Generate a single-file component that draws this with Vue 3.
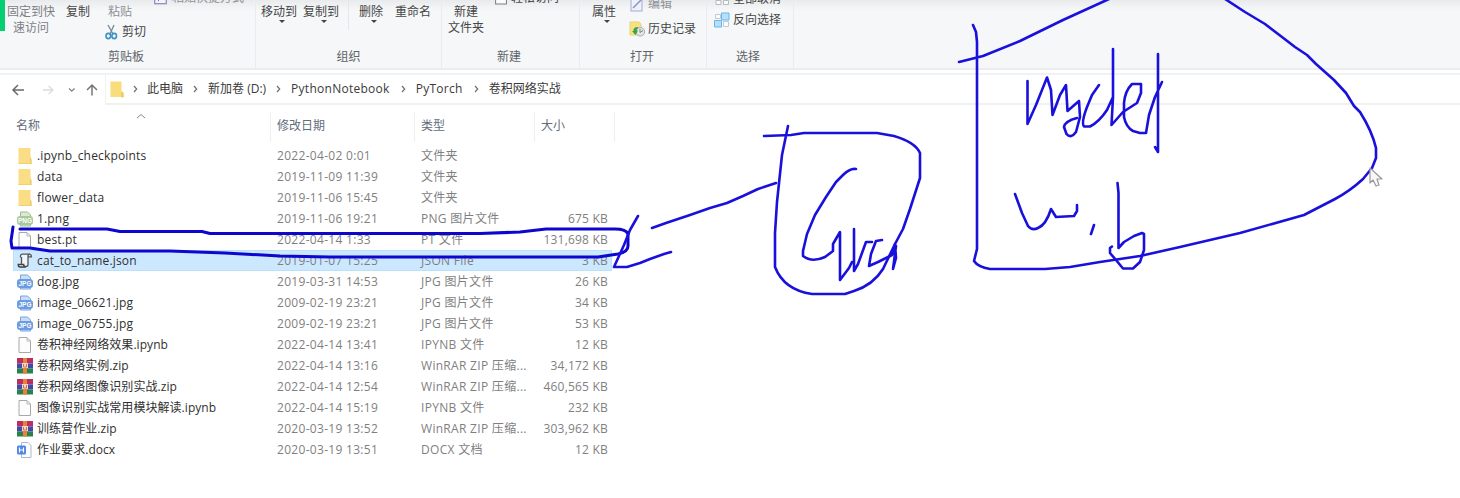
<script setup>
const files = [
  { icon: 'folder', name: '.ipynb_checkpoints', date: '2022-04-02 0:01', type: '文件夹', size: '' },
  { icon: 'folder', name: 'data', date: '2019-11-09 11:39', type: '文件夹', size: '' },
  { icon: 'folder', name: 'flower_data', date: '2019-11-06 15:45', type: '文件夹', size: '' },
  { icon: 'png', name: '1.png', date: '2019-11-06 19:21', type: 'PNG 图片文件', size: '675 KB' },
  { icon: 'file', name: 'best.pt', date: '2022-04-14 1:33', type: 'PT 文件', size: '131,698 KB' },
  { icon: 'json', name: 'cat_to_name.json', date: '2019-01-07 15:25', type: 'JSON File', size: '3 KB', selected: true },
  { icon: 'jpg', name: 'dog.jpg', date: '2019-03-31 14:53', type: 'JPG 图片文件', size: '26 KB' },
  { icon: 'jpg', name: 'image_06621.jpg', date: '2009-02-19 23:21', type: 'JPG 图片文件', size: '34 KB' },
  { icon: 'jpg', name: 'image_06755.jpg', date: '2009-02-19 23:21', type: 'JPG 图片文件', size: '53 KB' },
  { icon: 'file', name: '卷积神经网络效果.ipynb', date: '2022-04-14 13:41', type: 'IPYNB 文件', size: '12 KB' },
  { icon: 'zip', name: '卷积网络实例.zip', date: '2022-04-14 13:16', type: 'WinRAR ZIP 压缩...', size: '34,172 KB' },
  { icon: 'zip', name: '卷积网络图像识别实战.zip', date: '2022-04-14 12:54', type: 'WinRAR ZIP 压缩...', size: '460,565 KB' },
  { icon: 'file', name: '图像识别实战常用模块解读.ipynb', date: '2022-04-14 15:19', type: 'IPYNB 文件', size: '232 KB' },
  { icon: 'zip', name: '训练营作业.zip', date: '2020-03-19 13:52', type: 'WinRAR ZIP 压缩...', size: '303,962 KB' },
  { icon: 'docx', name: '作业要求.docx', date: '2020-03-19 13:51', type: 'DOCX 文档', size: '12 KB' },
]
const crumbs = ['此电脑', '新加卷 (D:)', 'PythonNotebook', 'PyTorch', '卷积网络实战']
const isLatin = (s) => /^[\x20-\x7e]+$/.test(s)
</script>

<template>
  <div class="window">
    <header class="ribbon">
      <section class="group clip">
        <div class="tools">
          <div class="big pin">固定到快<br>速访问</div>
          <div class="big copy">复制</div>
          <div class="stack paste">
            <div class="faded">粘贴</div>
            <div class="line">
              <svg width="13" height="16" viewBox="0 0 13 16">
                <path d="M3 1 8 10M9 1 5 10" stroke="#788898" stroke-width="1.3" fill="none" />
                <ellipse cx="3.3" cy="12" rx="2.3" ry="2.6" fill="none" stroke="#3e91c0" stroke-width="1.6" />
                <ellipse cx="9.2" cy="12" rx="2.3" ry="2.6" fill="none" stroke="#3e91c0" stroke-width="1.6" />
              </svg>
              <span>剪切</span>
            </div>
          </div>
          <div class="line shortcut faded">
            <svg width="13" height="14" viewBox="0 0 13 14"><rect x=".7" y=".7" width="11.6" height="12" fill="#f2f4fc" stroke="#8c91bf" stroke-width="1.3" /><path d="M4 10 8 6M5 6h3v3" fill="none" stroke="#6373bd" /></svg>
            <span>粘贴快捷方式</span>
          </div>
        </div>
        <div class="label">剪贴板</div>
      </section>

      <section class="group organize">
        <div class="tools">
          <div class="big drop">移动到<i></i></div>
          <div class="big drop">复制到<i></i></div>
          <div class="rule"></div>
          <div class="big drop">删除<i></i></div>
          <div class="big">重命名</div>
        </div>
        <div class="label">组织</div>
      </section>

      <section class="group create">
        <div class="tools">
          <div class="big">新建<br>文件夹</div>
          <div class="line easy">
            <svg width="12" height="14" viewBox="0 0 12 14"><rect x=".6" y=".6" width="10.8" height="12.4" fill="#fafbfc" stroke="#777c82" /></svg>
            <span>轻松访问</span>
          </div>
        </div>
        <div class="label">新建</div>
      </section>

      <section class="group open">
        <div class="tools">
          <div class="big drop">属性<i></i></div>
          <div class="stack">
            <div class="line edit faded">
              <svg width="14" height="16" viewBox="0 0 14 16"><rect x="1" y="1" width="11" height="14" fill="#eef0fa" stroke="#a7abcf" /><path d="M3 12 12 3" stroke="#8d95c6" stroke-width="1.5" /></svg>
              <span>编辑</span>
            </div>
            <div class="line history">
              <svg width="17" height="16" viewBox="0 0 17 16"><path d="M1 1h9l2 2v11H1z" fill="#fae084" stroke="#ecd170" /><circle cx="11.3" cy="10.8" r="4.3" fill="#e1e5e6" stroke="#a5adae" /><path d="M11 8v3.500l3-2" fill="none" stroke="#7c8686" /><path d="M9 6Q4 6 4.500 10L3 10l3.500 4 2.500-4.500H7.500Q7.500 7.500 9 7.500" fill="#37a544" /></svg>
              <span>历史记录</span>
            </div>
          </div>
        </div>
        <div class="label">打开</div>
      </section>

      <section class="group select">
        <div class="tools">
          <div class="stack">
            <div class="line none">
              <svg width="16" height="16" viewBox="0 0 16 16"><path d="M2 2h5v5H2zM9.500 2h5v5h-5zM2 9.500h5v4H2zM9.500 9.500h5v4h-5z" fill="#fafbfc" stroke="#b7bbbf" /></svg>
              <span>全部取消</span>
            </div>
            <div class="line">
              <svg width="16" height="16" viewBox="0 0 16 16"><path d="M1.500 2.500h5v4h-5zM9.500 9.500h5v5h-5z" fill="#fafbfc" stroke="#c0c9d0" /><path d="M7.500 1h7.500v7H7.500zM.5 8.500h7v6.500h-7z" fill="#b4e0fb" stroke="#69b5e7" /></svg>
              <span>反向选择</span>
            </div>
          </div>
        </div>
        <div class="label">选择</div>
      </section>
    </header>

    <nav class="address">
      <svg class="arrows" width="105" height="29" viewBox="0 0 105 29" fill="none">
        <path d="M24 15H13M18 10l-5 5 5 5" stroke="#6b6b6b" stroke-width="1.5" />
        <path d="M43 15h10M48.500 11l4.500 4-4.500 4" stroke="#dcdcdc" stroke-width="1.3" />
        <path d="M69 13.500l2.800 2.600 2.800-2.600" stroke="#888" stroke-width="1.3" />
        <path d="M92 20.500V10M87 15l5-5 5 5" stroke="#757575" stroke-width="1.5" />
      </svg>
      <div class="path">
        <svg class="icon" width="14" height="17" viewBox="0 0 14 17"><path d="M.5.5h11V11l2 1v4H.5z" fill="#f9dc7b" /><path d="M11.500 10v6.500h2V12z" fill="#eac65b" /></svg>
        <template v-for="crumb in crumbs" :key="crumb">
          <svg class="chev" width="5" height="8" viewBox="0 0 5 8"><path d="M1 1l2.700 3L1 7" fill="none" stroke="#707070" stroke-width="1.2" /></svg>
          <span class="crumb" :class="{ latin: isLatin(crumb) }">{{ crumb }}</span>
        </template>
      </div>
    </nav>

    <main class="list">
      <div class="row head">
        <span>名称<svg class="sort" width="10" height="6" viewBox="0 0 10 6"><path d="M1 5l4-3.500L9 5" fill="none" stroke="#8a8a8a" /></svg></span>
        <span>修改日期</span>
        <span>类型</span>
        <span>大小</span>
      </div>
      <div v-for="f in files" :key="f.name" class="row" :class="{ selected: f.selected }">
        <div class="name">
          <svg class="icon" width="16" height="18" viewBox="0 0 16 18">
            <template v-if="f.icon === 'folder'">
              <path d="M1.500 1h12v11l1 1v4h-13z" fill="#fadd84" /><path d="M13 10v7h1.500v-5z" fill="#eccb68" /><path d="M1.500 16.500h13" stroke="#f0d06f" />
            </template>
            <template v-else-if="f.icon === 'file'">
              <path d="M2 1.500h8l3.500 3.500v11.500H2z" fill="#fdfdfd" stroke="#a8a8a8" /><path d="M10 1.500V5h3.500" fill="none" stroke="#b8b8b8" />
            </template>
            <template v-else-if="f.icon === 'json'">
              <path d="M3.500 5.500V4q0-1.800 2-1.800h7.500q-2 0-2 2v8.300q0 2-2 2H3q1.500-.5 1.500-2.500V5" fill="#f1f6fa" stroke="#555" stroke-width="1.3" /><path d="M1.200 12.500q0 2.500 2 2.500h5.500q-2 0-2-2.500z" fill="#f4f4f4" stroke="#444" stroke-width="1.400" /><path d="M12.500 2q2 .2 2 2.800H11" fill="none" stroke="#555" stroke-width="1.200" />
            </template>
            <template v-else-if="f.icon === 'jpg' || f.icon === 'png'">
              <path d="M3.500 2h7l3 3v11h-10z" :fill="f.icon === 'jpg' ? '#c9defa' : '#d9ebd1'" :stroke="f.icon === 'jpg' ? '#78a4df' : '#9bbd8c'" />
              <rect x="0" y="6" width="16" height="9" rx="3" :fill="f.icon === 'jpg' ? '#6b9ce3' : '#a8c899'" />
              <text x="8" y="13" class="tag">{{ f.icon.toUpperCase() }}</text>
            </template>
            <template v-else-if="f.icon === 'zip'">
              <rect x="0" y="1" width="16" height="5.500" fill="#b92f62" /><rect x="0" y="6.500" width="16" height="5" fill="#4549a6" /><rect x="0" y="11.500" width="16" height="5" fill="#27824d" />
              <rect x="6" y="1" width="4" height="15.500" fill="#ee7f37" /><rect x="5" y="6" width="6" height="5" fill="#f1d8cb" /><path d="M6.500 7v3h3V7" fill="none" stroke="#c9735c" />
            </template>
            <template v-else>
              <path d="M4.500 1.500h6.500l3 3v12h-9.500z" fill="#fcfdff" stroke="#aeb9d0" /><rect x="0" y="4.500" width="9" height="9" rx="1.500" fill="#4e86e4" /><path d="M2.500 6.500v5M6.500 6.500v5M2.500 9h4" fill="none" stroke="#fff" stroke-width="1.200" />
            </template>
          </svg>
          <span :class="{ latin: isLatin(f.name) }">{{ f.name }}</span>
        </div>
        <span class="meta date">{{ f.date }}</span>
        <span class="meta type">{{ f.type }}</span>
        <span class="meta size">{{ f.size }}</span>
      </div>
    </main>

    <!-- Pen annotations drawn over the desktop -->
    <svg class="ink" width="1460" height="498" viewBox="0 0 1460 498">
      <g fill="none" stroke="#1a10dc" stroke-width="2.6" stroke-linecap="round" stroke-linejoin="round">
        <g stroke="#0d06cf" stroke-width="3">
          <path d="M20 229H107L120 231.500H202L210 233.500H480L520 232 546 229H615Q626 229 628 234V246Q628 252 618 254L598 257H330L280 256 225 253 170 251 110 251H50L30 248H12L11 241 13 227" />
        </g>
        <path d="M638 216 630 230 624 245 614 267H627L640 263 650 259 664 254 671 252" />
        <path d="M652 228 666 223 690 215 710 208 727 203 743 196 758 189 776 183" />
        <path d="M764 136 791 135 804 133H877L894 136Q915 142 920 153V178L910 209 903 229 895 244 883 269Q873 285 854 291L845 294H812Q784 290 775 267V233L777 202 782 155 788 126" />
        <path d="M856 169Q850 168 843 175L836 182 826 197 815 215 807 234 803 251V256Q812 263 825 257L833 251V244L840 232V280L849 268 852 262M854 229V271L858 264 866 242 872 242M882 240 876 241 871 254 869 266 878 262 892 255 896 246 893 269 896 258 895 244" />
        <path d="M959 62 983 56 1020 41 1063 20 1109-1M973 25 976 32 977 42V249L974 261Q978 267 990 269H1045L1070 267 1100 262 1140 256 1180 247 1240 233 1304 215 1335 199Q1350 191 1363 179L1372 168 1376 158V148Q1372 131 1360 112L1354 106 1346 93 1334 80 1316 64 1307 55 1295 47 1282 37 1265 24 1245 12 1225-1" />
        <path d="M1027.500 81V124L1036 105 1047 77.500 1051 90 1052.500 115 1060 95 1066 85 1067.500 111 1079 101 1080 117 1076 132Q1071 139 1066.500 134L1064 127Q1065 121 1077 118M1099 85 1092 95 1087 107Q1081 123 1084 126.500H1090Q1099 122 1107 110L1113 97M1113 49V97L1111.500 125 1123 112 1137 103 1141 93V84H1132Q1125 91 1124 103V117Q1126 127 1133 131L1140 133H1146L1149 115 1155 97 1162 82M1158 54V152L1155 147" />
        <path d="M1015 194 1022 213 1028 226Q1032 231 1038 228Q1046 225 1051 209L1056 217 1074 216 1077 211V205M1094 225 1091 234M1117.500 183 1118.500 193V248L1124 242 1134 236 1142 233 1144 234V250L1140 262 1133 268.500H1123L1116 260 1110 253V248L1112 246.500" />
      </g>
      <path d="M1370 168v15l3-3 3 6 3-1-2-6h5z" fill="#f8f8f8" stroke="#9b969f" stroke-width="1.200" stroke-linejoin="round" />
    </svg>
    <div class="accent"></div>
  </div>
</template>

<style>
html, body { margin: 0; overflow: hidden; background: #fff; }
</style>

<style scoped>
.window { position: relative; width: 1460px; height: 498px; overflow: hidden; background: #fff; color: #454545; font: 12px/16px "Open Sans", "Noto Sans CJK SC", sans-serif; }
svg { display: block; flex: none; }
.ribbon { display: flex; box-sizing: border-box; height: 70px; overflow: hidden; background: linear-gradient(#e9eaec, #f5f7f9 10px); border-bottom: 2px solid #eaecee; white-space: nowrap; }
.group { box-sizing: border-box; border-right: 1px solid #e9ecef; flex: none; }
.tools { display: flex; align-items: flex-start; height: 49px; padding-top: 4px; box-sizing: border-box; }
.label { text-align: center; color: #606468; }
.big { position: relative; text-align: center; }
.drop i { position: absolute; left: 50%; top: 16px; margin-left: 0; border: 3px solid transparent; border-top: 3px solid #444; border-bottom: 0; }
.line { display: flex; align-items: center; gap: 4px; }
.faded { color: #8e9194; }
.clip { width: 256px; padding-left: 7px; }
.clip .label { margin-right: 10px; }
.pin { color: #7c7f83; }
.copy { margin-left: 11px; }
.paste { margin-left: 15px; }
.paste .faded { margin-left: 3px; height: 20px; }
.shortcut { margin: -14px 0 0 8px; gap: 5px; }
.organize { width: 186px; }
.organize .tools { padding-left: 5px; }
.organize .big { margin-right: 6px; }
.organize .rule { width: 1px; height: 30px; margin: -4px 10px 0 3px; background: #e4e7ea; }
.organize .rule + .big { margin-right: 12px; }
.create { width: 138px; }
.create .tools { padding-left: 6px; }
.easy { margin: -14px 0 0 11px; }
.create .label { margin-right: 3px; }
.open { width: 127px; }
.open .tools { padding-left: 12px; gap: 13px; }
.edit { margin: -8px 0 9px 1px; }
.history { gap: 2px; }
.open .label { margin-right: 2px; }
.select { width: 87px; }
.select .tools { padding-left: 7px; }
.select .line { gap: 3px; }
.none { margin: -13px 0 5px; }
.select .label { margin-right: 4px; }
.address { display: flex; box-sizing: border-box; height: 32px; margin-top: 3px; border-top: 2px solid #f1f2f3; }
.arrows { margin-top: 0; }
.path { flex: 1; display: flex; align-items: center; padding: 0 0 0 4px; border: solid #f0f1f1; border-width: 0 0 2px 1px; color: #3a3a3a; }
.chev { margin: 0 10px; }
.icon + .chev { margin: 0 9px; }
.crumb { white-space: nowrap; }
.crumb.latin { letter-spacing: .27px; margin-right: 1px; }
.list { width: 616px; }
.row { display: grid; grid-template-columns: 264px 144px 117px 70px; width: 599px; height: 21px; margin-left: 13px; align-items: center; box-sizing: border-box; white-space: nowrap; }
.head { grid-template-columns: 255px 144px 120px 80px; width: 603px; margin-left: 16px; height: 40px; padding-top: 4px; color: #626d7c; }
.head span { position: relative; border-right: 1px solid #edeff1; height: 30px; line-height: 27px; }
.head span + span { padding-left: 6px; }
.sort { position: absolute; left: 120px; top: 1px; }
.name { display: flex; align-items: center; gap: 4px; padding-left: 4px; color: #303030; }
.name span { letter-spacing: .05px; }
.name .latin { letter-spacing: .17px; }
.meta { color: #7f7f7f; }
.date, .type { letter-spacing: .3px; }
.size { text-align: right; letter-spacing: .2px; }
.selected { background: #cce8ff; box-shadow: inset 0 0 0 1px #bce0fa; }
.tag { font: bold 6.5px "Liberation Sans", sans-serif; fill: #fff; text-anchor: middle; }
.ink { position: absolute; inset: 0; pointer-events: none; }
.accent { position: absolute; left: 0; top: 0; width: 5px; height: 31px; background: #05cf72; }
</style>
